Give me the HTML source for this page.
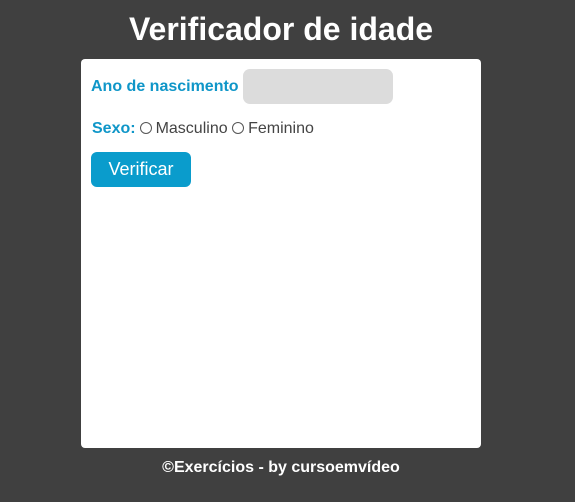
<!DOCTYPE html>
<html><head><style>
body{margin:0;background:#404040;width:575px;height:502px;font-family:"Liberation Sans",sans-serif;position:relative;overflow:hidden}
h1{position:absolute;top:11px;left:0;width:562px;text-align:center;margin:0;color:#fff;font-size:32px;font-weight:bold}
.card{position:absolute;left:81px;top:59px;width:400px;height:389px;background:#fff;border-radius:4px}
.lbl{position:absolute;color:#0f96c8;font-weight:bold;font-size:16px}
.inp{position:absolute;left:162px;top:10px;width:150px;height:35px;background:#dcdcdc;border-radius:7px}
.radio{display:inline-block;width:10px;height:10px;border:1px solid #555;border-radius:50%;vertical-align:-1px;margin:0 4px 0 4px}
.txt{color:#444;font-weight:normal}
.btn{position:absolute;left:10px;top:93px;width:100px;height:35px;background:#0a9ccc;border-radius:6px;color:#fff;font-size:18px;text-align:center;line-height:34px}
.foot{position:absolute;top:459px;left:0;width:562px;text-align:center;color:#fff;font-weight:bold;font-size:16px}
</style></head><body>
<h1>Verificador de idade</h1>
<div class="card">
<div class="lbl" style="left:11px;top:61px">Sexo:<span class="txt"><span class="radio"></span>Masculino <span class="radio" style="margin-left:0"></span>Feminino</span></div>
<div class="lbl" style="left:10px;top:19px">Ano de nascimento</div>
<div class="inp"></div>
<div class="btn">Verificar</div>
</div>
<div class="foot">©Exercícios - by cursoemvídeo</div>
</body></html>
